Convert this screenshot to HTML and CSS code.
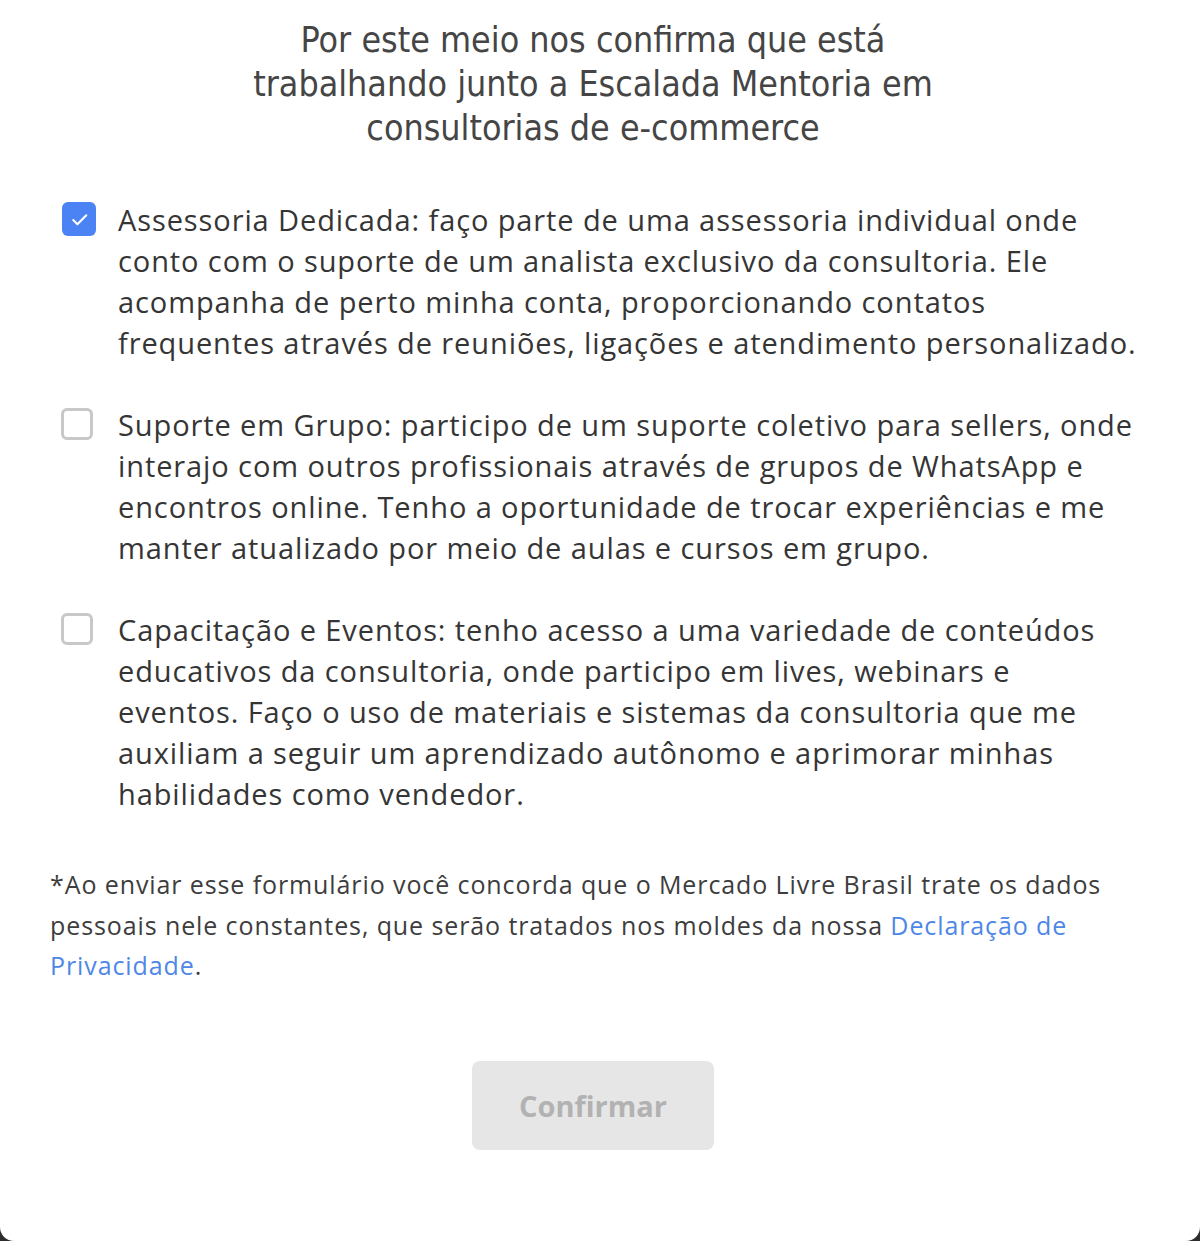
FILE: index.html
```html
<!DOCTYPE html>
<html lang="pt-BR">
<head>
<meta charset="utf-8">
<title>Confirmação</title>
<link rel="stylesheet" href="styles.css">
</head>
<body>
<div class="modal">
  <div class="content">
    <h1 class="title">Por este meio nos confirma que está<br>trabalhando junto a Escalada Mentoria em<br>consultorias de e-commerce</h1>

    <ul class="options">
      <li class="option">
        <span class="box box-checked">
          <svg viewBox="0 0 24 24" width="25" height="25"><path d="M6 12.5l4 4L18.5 8" fill="none" stroke="#fff" stroke-width="2" stroke-linecap="round" stroke-linejoin="round"/></svg>
        </span>
        <p class="option-text">Assessoria Dedicada: faço parte de uma assessoria individual onde<br>conto com o suporte de um analista exclusivo da consultoria. Ele<br>acompanha de perto minha conta, proporcionando contatos<br>frequentes através de reuniões, ligações e atendimento personalizado.</p>
      </li>
      <li class="option">
        <span class="box"></span>
        <p class="option-text">Suporte em Grupo: participo de um suporte coletivo para sellers, onde<br>interajo com outros profissionais através de grupos de WhatsApp e<br>encontros online. Tenho a oportunidade de trocar experiências e me<br>manter atualizado por meio de aulas e cursos em grupo.</p>
      </li>
      <li class="option">
        <span class="box"></span>
        <p class="option-text">Capacitação e Eventos: tenho acesso a uma variedade de conteúdos<br>educativos da consultoria, onde participo em lives, webinars e<br>eventos. Faço o uso de materiais e sistemas da consultoria que me<br>auxiliam a seguir um aprendizado autônomo e aprimorar minhas<br>habilidades como vendedor.</p>
      </li>
    </ul>

    <p class="legal">*Ao enviar esse formulário você concorda que o Mercado Livre Brasil trate os dados<br>pessoais nele constantes, que serão tratados nos moldes da nossa <a class="link" href="#">Declaração de<br>Privacidade</a>.</p>

    <div class="actions">
      <button class="btn" disabled>Confirmar</button>
    </div>
  </div>
</div>
</body>
</html>
```
FILE: styles.css
```css
html, body {
  margin: 0;
  padding: 0;
}
body {
  background: #2c2c2c;
  width: 1200px;
  height: 1241px;
  overflow: hidden;
}
.modal {
  width: 1200px;
  height: 1241px;
  background: #fff;
  border-radius: 0 0 14px 14px;
  box-sizing: border-box;
  padding: 18px 14px 0 0;
}
.content {
  display: flex;
  flex-direction: column;
}
.title {
  margin: 0 auto;
  text-align: center;
  font-family: "Liberation Sans Narrow", "DejaVu Sans Condensed", Roboto, sans-serif;
  font-weight: 400;
  font-size: 35.5px;
  line-height: 44px;
  color: #454545;
}
.options {
  list-style: none;
  margin: 49px 0 0 0;
  padding: 0 0 0 61px;
  display: flex;
  flex-direction: column;
  gap: 41px;
}
.option {
  display: flex;
  align-items: flex-start;
  gap: 22px;
}
.box {
  flex: none;
  width: 26px;
  height: 26px;
  margin-top: 4px;
  margin-right: 3px;
  border: 3px solid #c8c8c8;
  border-radius: 6px;
  display: flex;
  align-items: center;
  justify-content: center;
}
.box-checked {
  width: 34px;
  height: 34px;
  margin-top: 3px;
  margin-left: 1px;
  margin-right: 0;
  border: none;
  background: #4b82f4;
}
.option-text {
  margin: 0;
  width: 1070px;
  font-family: "Open Sans", Lato, sans-serif;
  font-size: 29px;
  letter-spacing: 0.9px;
  line-height: 41px;
  color: #353535;
}
.legal {
  margin: 50px 0 0 0;
  padding: 0 0 0 50px;
  font-family: "Open Sans", Lato, sans-serif;
  font-size: 25px;
  letter-spacing: 0.9px;
  line-height: 40.5px;
  color: #3d3d3d;
}
.link {
  color: #4f87e6;
  text-decoration: none;
}
.actions {
  display: flex;
  justify-content: center;
  margin-top: 75px;
}
.btn {
  width: 242px;
  height: 89px;
  border: none;
  border-radius: 8px;
  background: #e6e6e6;
  color: #b2b2b2;
  font-family: "Open Sans", Lato, sans-serif;
  font-weight: 700;
  font-size: 29px;
}
```
